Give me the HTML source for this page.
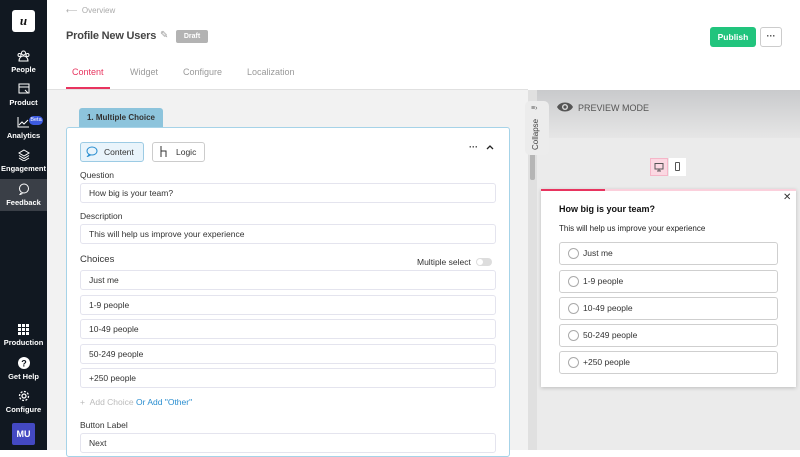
<!DOCTYPE html>
<html><head><style>
*{box-sizing:border-box;margin:0;padding:0}
body{width:800px;height:450px;overflow:hidden;font-family:"Liberation Sans",sans-serif;background:#fff;position:relative;color:#333}
.a{position:absolute}
.sb{left:0;top:0;width:47px;height:450px;background:#111821}
.ni{position:absolute;left:0;width:47px;text-align:center;color:#fff;font-size:7.5px;font-weight:bold}
.ni svg{display:block;margin:0 auto 3px}
.inp{position:absolute;left:80px;width:416px;height:20px;background:#fff;border:1px solid #e4e4ee;border-radius:3px;font-size:8.5px;padding-left:8px;line-height:18px;color:#333}
.lbl{position:absolute;left:80px;font-size:8.5px;color:#333}
.opt{position:absolute;left:559px;width:219px;height:23px;border:1px solid #cfcfcf;border-radius:3px;font-size:8.5px;line-height:21px;padding-left:23px;color:#333;background:#fff}
.opt:before{content:"";position:absolute;left:8px;top:5px;width:9px;height:9px;border:1px solid #aaa;border-radius:50%}
</style></head><body>
<div class="a sb"></div>
<div class="a" style="left:12px;top:10px;width:23px;height:22px;background:#fff;border-radius:3px;text-align:center;font:italic bold 13px 'Liberation Serif',serif;line-height:22px;color:#111">u</div>
<div class="ni" style="top:50px"><svg width="13" height="12" viewBox="0 0 13 12" fill="none" stroke="#fff" stroke-width="1"><circle cx="6.5" cy="3" r="2"/><circle cx="2.5" cy="5" r="1.5"/><circle cx="10.5" cy="5" r="1.5"/><path d="M2 11c0-3 2-5 4.5-5s4.5 2 4.5 5z"/></svg>People</div>
<div class="ni" style="top:83px"><svg width="12" height="12" viewBox="0 0 12 12" fill="none" stroke="#fff"><rect x="1" y="1" width="10" height="9"/><path d="M1 4h10M7 7l3 3"/></svg>Product</div>
<div class="ni" style="top:116px"><svg width="13" height="12" viewBox="0 0 13 12" fill="none" stroke="#fff"><path d="M1 1v10h11M2 9l3-3 2 2 4-4"/></svg>Analytics</div>
<div class="a" style="left:29px;top:116px;width:14px;height:9px;border-radius:5px;background:#3d5be0;color:#fff;font-size:5.5px;text-align:center;line-height:9px">Beta</div>
<div class="ni" style="top:149px"><svg width="12" height="12" viewBox="0 0 12 12" fill="none" stroke="#fff"><path d="M6 1l5 3-5 3-5-3zM1 6.5l5 3 5-3M1 9l5 3 5-3"/></svg>Engagement</div>
<div class="a" style="left:0;top:179px;width:47px;height:32px;background:#3a3f47"></div>
<div class="ni" style="top:183px"><svg width="12" height="12" viewBox="0 0 12 12" fill="none" stroke="#fff"><circle cx="6" cy="5.5" r="4.5"/><path d="M3 10l-1 1.5 2.5-1"/></svg>Feedback</div>
<div class="ni" style="top:324px"><svg width="11" height="11" viewBox="0 0 11 11" fill="#fff"><rect x="0" y="0" width="3" height="3"/><rect x="4" y="0" width="3" height="3"/><rect x="8" y="0" width="3" height="3"/><rect x="0" y="4" width="3" height="3"/><rect x="4" y="4" width="3" height="3"/><rect x="8" y="4" width="3" height="3"/><rect x="0" y="8" width="3" height="3"/><rect x="4" y="8" width="3" height="3"/><rect x="8" y="8" width="3" height="3"/></svg>Production</div>
<div class="ni" style="top:357px"><svg width="12" height="12" viewBox="0 0 12 12"><circle cx="6" cy="6" r="6" fill="#fff"/><text x="6" y="9.5" font-size="9" font-weight="bold" text-anchor="middle" fill="#111821" font-family="Liberation Sans">?</text></svg>Get Help</div>
<div class="ni" style="top:390px"><svg width="12" height="12" viewBox="0 0 12 12" fill="none" stroke="#fff" stroke-width="1.3"><circle cx="6" cy="6" r="2"/><circle cx="6" cy="6" r="4.5" stroke-dasharray="2 1.5"/></svg>Configure</div>
<div class="a" style="left:12px;top:423px;width:23px;height:22px;background:#4449c2;color:#fff;font-size:9px;font-weight:bold;text-align:center;line-height:22px;border-radius:2px">MU</div>

<div class="a" style="left:66px;top:6px;font-size:8px;color:#aaa">⟵ &nbsp;Overview</div>
<div class="a" style="left:66px;top:30px;font-size:11px;font-weight:bold;color:#444;letter-spacing:-0.2px">Profile New Users</div>
<div class="a" style="left:160px;top:30px;font-size:10px;color:#999">✎</div>
<div class="a" style="left:176px;top:30px;width:32px;height:13px;background:#b3b3b3;border-radius:2px;color:#fff;font-size:7px;font-weight:bold;text-align:center;line-height:13px">Draft</div>
<div class="a" style="left:710px;top:27px;width:46px;height:20px;background:#21c47d;border-radius:3px;color:#fff;font-size:8.5px;font-weight:bold;text-align:center;line-height:20px">Publish</div>
<div class="a" style="left:760px;top:27px;width:22px;height:20px;border:1px solid #ccc;border-radius:3px;text-align:center;font-size:9px;line-height:16px;font-weight:bold">···</div>
<div class="a" style="left:72px;top:67px;font-size:9px;color:#e8345f">Content</div>
<div class="a" style="left:130px;top:67px;font-size:9px;color:#999">Widget</div>
<div class="a" style="left:183px;top:67px;font-size:9px;color:#999">Configure</div>
<div class="a" style="left:247px;top:67px;font-size:9px;color:#999">Localization</div>
<div class="a" style="left:66px;top:87px;width:44px;height:2px;background:#e8345f"></div>

<div class="a" style="left:47px;top:89px;width:481px;height:361px;background:#f2f2f2;border-top:1px solid #e0e0e0"></div>
<div class="a" style="left:79px;top:108px;width:84px;height:20px;background:#8dc4dc;border-radius:3px 3px 0 0;font-size:8px;font-weight:bold;color:#333;text-align:center;line-height:20px">1. Multiple Choice</div>
<div class="a" style="left:66px;top:127px;width:444px;height:330px;background:#fff;border:1px solid #a6d3e8;border-radius:3px"></div>
<div class="a" style="left:80px;top:142px;width:64px;height:20px;border:1px solid #9ccbe4;background:#e9f4fb;border-radius:3px;font-size:8.5px;line-height:18px;padding-left:23px">Content</div>
<svg class="a" style="left:86px;top:146px" width="12" height="11" viewBox="0 0 12 11" fill="none" stroke="#2a8ed0"><ellipse cx="6" cy="5" rx="5" ry="4"/><path d="M3 8.5l-1.5 2 3-1.3"/></svg>
<div class="a" style="left:152px;top:142px;width:53px;height:20px;border:1px solid #ccc;background:#fff;border-radius:3px;font-size:8.5px;line-height:18px;padding-left:23px">Logic</div>
<svg class="a" style="left:159px;top:145px" width="10" height="13" viewBox="0 0 10 13" fill="none" stroke="#333"><path d="M2 1v11M2 6h5v6"/></svg>
<div class="a" style="left:469px;top:142px;font-size:9px;font-weight:bold">···</div>
<svg class="a" style="left:486px;top:144px" width="8" height="6" viewBox="0 0 8 6" fill="none" stroke="#222" stroke-width="1.3"><path d="M1 5l3-3 3 3"/></svg>

<div class="lbl" style="top:170px">Question</div>
<div class="inp" style="top:183px">How big is your team?</div>
<div class="lbl" style="top:211px">Description</div>
<div class="inp" style="top:224px">This will help us improve your experience</div>
<div class="lbl" style="top:254px;font-size:9.5px">Choices</div>
<div class="a" style="left:417px;top:257px;font-size:8.5px">Multiple select</div>
<div class="a" style="left:476px;top:258px;width:16px;height:8px;border-radius:4px;background:#ddd"><div style="width:6px;height:6px;border-radius:50%;background:#fff;margin:1px"></div></div>
<div class="inp" style="top:270px">Just me</div>
<div class="inp" style="top:295px">1-9 people</div>
<div class="inp" style="top:319px">10-49 people</div>
<div class="inp" style="top:344px">50-249 people</div>
<div class="inp" style="top:368px">+250 people</div>
<div class="a" style="left:80px;top:397px;font-size:8.5px;color:#bbb">+ &nbsp;Add Choice <span style="color:#2a8ed0">Or Add "Other"</span></div>
<div class="lbl" style="top:420px">Button Label</div>
<div class="inp" style="top:433px">Next</div>

<div class="a" style="left:528px;top:90px;width:10px;height:360px;background:#e0e0e0"></div>
<div class="a" style="left:530px;top:110px;width:5px;height:70px;background:#b5b5b5;border-radius:2px"></div>
<div class="a" style="left:537px;top:90px;width:263px;height:360px;background:#ebebeb"></div>
<div class="a" style="left:537px;top:90px;width:263px;height:48px;background:linear-gradient(#c9cacc,#e6e6e6)"></div>
<div class="a" style="left:525px;top:101px;width:24px;height:54px;background:#ececec;border-radius:5px"></div>
<div class="a" style="left:531px;top:105px;font-size:7px;color:#555">≡›</div>
<div class="a" style="left:531px;top:150px;font-size:8px;color:#444;transform:rotate(-90deg);transform-origin:0 0;width:40px;white-space:nowrap">Collapse</div>
<svg class="a" style="left:556px;top:101px" width="18" height="12" viewBox="0 0 18 12"><path d="M1 6c3-6 13-6 16 0c-3 6-13 6-16 0z" fill="#555"/><circle cx="9" cy="6" r="3" fill="#ddd"/><circle cx="9" cy="6" r="1.6" fill="#555"/></svg>
<div class="a" style="left:578px;top:103px;font-size:9px;color:#555">PREVIEW MODE</div>
<div class="a" style="left:650px;top:158px;width:18px;height:18px;background:#fbd8e2;border:1px solid #f5b6c8"></div>
<svg class="a" style="left:654px;top:162px" width="10" height="10" viewBox="0 0 10 10" fill="none" stroke="#555"><rect x="1" y="1.5" width="8" height="5.5"/><path d="M5 7v2M3 9h4"/></svg>
<div class="a" style="left:669px;top:158px;width:17px;height:18px;background:#fff"></div>
<div class="a" style="left:675px;top:162px;width:5px;height:9px;border:1px solid #555;border-radius:1px"></div>

<div class="a" style="left:541px;top:189px;width:255px;height:198px;background:#fff;box-shadow:0 1px 4px rgba(0,0,0,.2)"></div>
<div class="a" style="left:541px;top:189px;width:255px;height:2px;background:#fbd0dc"></div>
<div class="a" style="left:541px;top:189px;width:64px;height:2px;background:#e8345f"></div>
<div class="a" style="left:783px;top:192px;font-size:10px;color:#333">✕</div>
<div class="a" style="left:559px;top:204px;font-size:9px;font-weight:bold;color:#111">How big is your team?</div>
<div class="a" style="left:559px;top:224px;font-size:8px;color:#222">This will help us improve your experience</div>
<div class="opt" style="top:242px">Just me</div>
<div class="opt" style="top:270px">1-9 people</div>
<div class="opt" style="top:297px">10-49 people</div>
<div class="opt" style="top:324px">50-249 people</div>
<div class="opt" style="top:351px">+250 people</div>
</body></html>
